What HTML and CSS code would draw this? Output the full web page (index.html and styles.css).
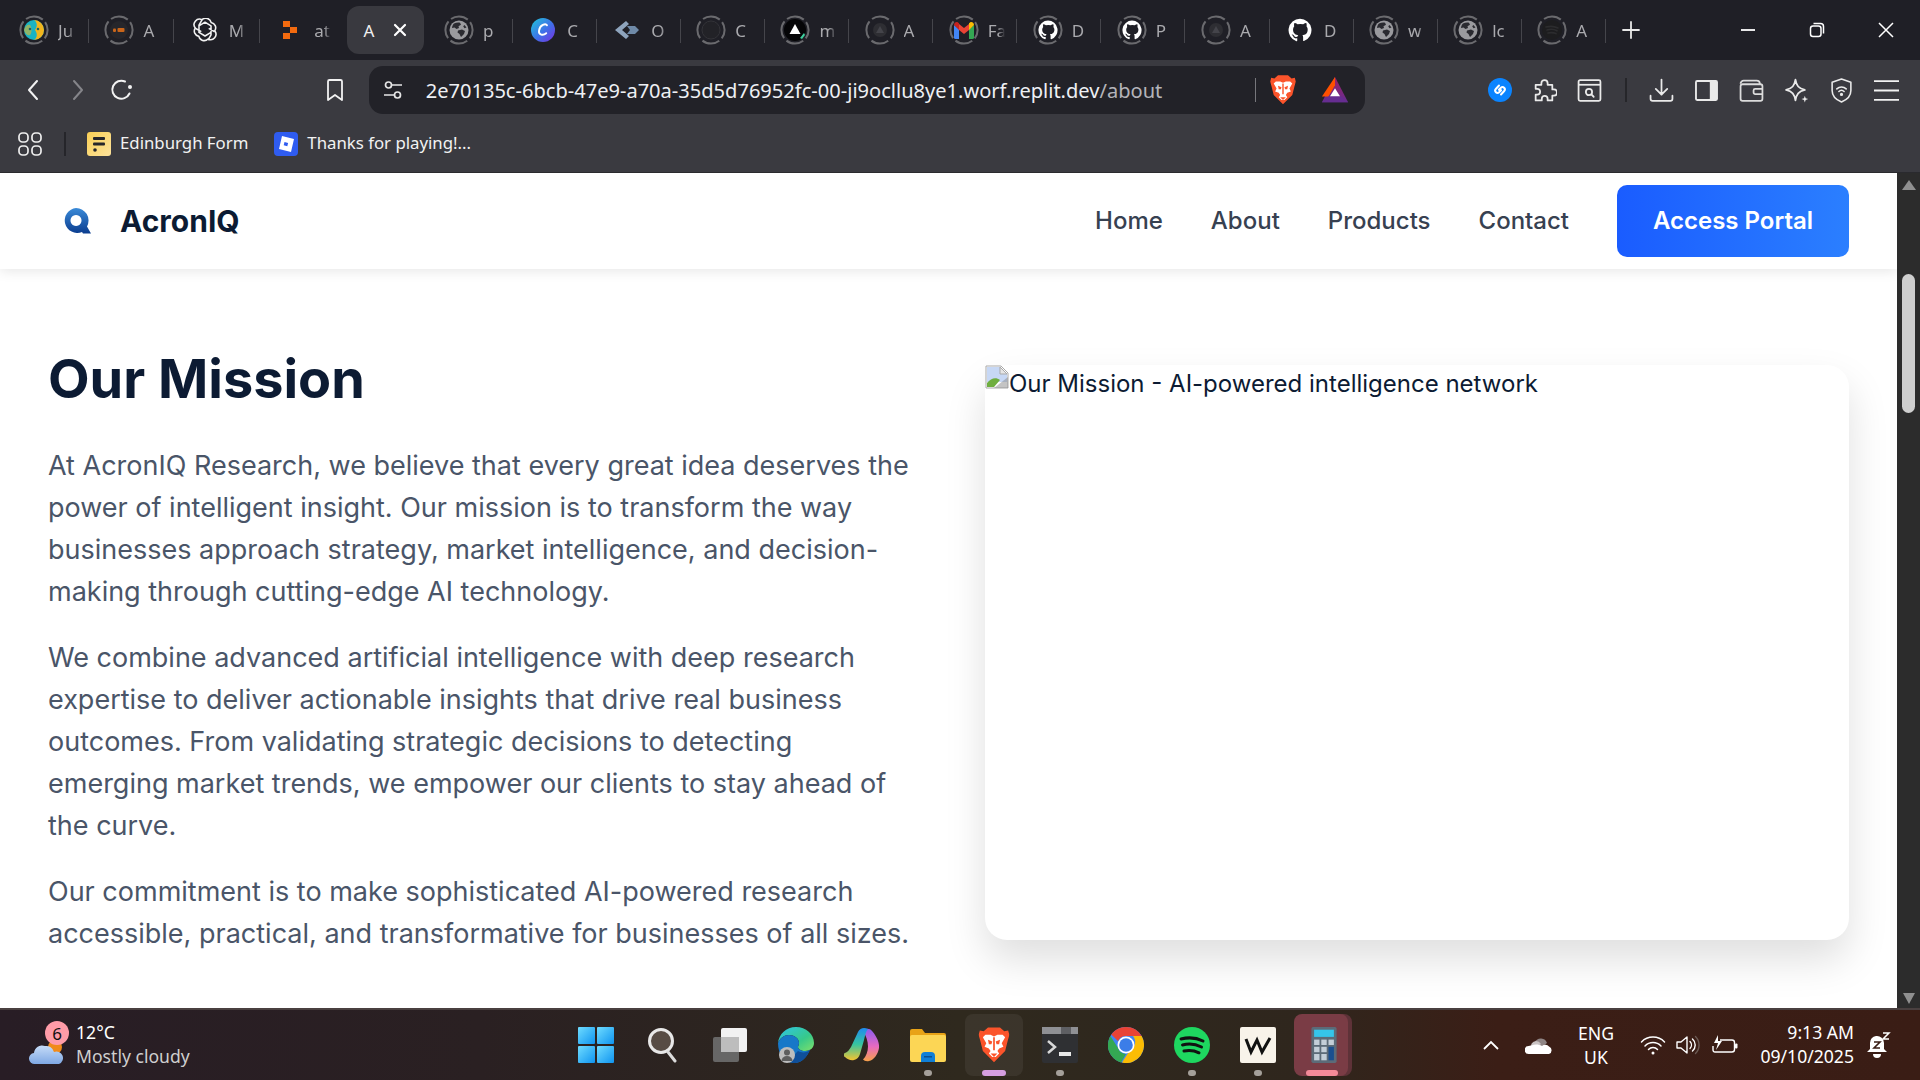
FILE: index.html
```html
<!DOCTYPE html>
<html lang="en">
<head>
<meta charset="utf-8">
<title>AcronIQ - About</title>
<link rel="stylesheet" href="styles.css">
</head>
<body>
<svg class="sprite" xmlns="http://www.w3.org/2000/svg">
  <defs>
    <linearGradient id="g-win" x1="0" y1="0" x2="1" y2="1"><stop offset="0" stop-color="#6fdcff"/><stop offset="1" stop-color="#0f94f0"/></linearGradient>
    <linearGradient id="g-btn" x1="0" y1="0" x2="0" y2="1"><stop offset="0" stop-color="#3a8ad8"/><stop offset="1" stop-color="#0b3d8f"/></linearGradient>
    <linearGradient id="g-edge" x1="0" y1="0" x2="1" y2="1"><stop offset="0" stop-color="#2fc4e8"/><stop offset=".6" stop-color="#37c98a"/><stop offset="1" stop-color="#7fe06a"/></linearGradient>
    <linearGradient id="g-cop1" x1="0" y1="0" x2="0" y2="1"><stop offset="0" stop-color="#1f8bf0"/><stop offset=".5" stop-color="#35c4a0"/><stop offset="1" stop-color="#f4c430"/></linearGradient>
    <linearGradient id="g-cop2" x1="0" y1="0" x2="0" y2="1"><stop offset="0" stop-color="#8a5cf0"/><stop offset=".55" stop-color="#e86ac0"/><stop offset="1" stop-color="#f7a14a"/></linearGradient>
    <linearGradient id="g-cloud" x1="0" y1="0" x2="0" y2="1"><stop offset="0" stop-color="#c6dcf8"/><stop offset="1" stop-color="#7fa8e4"/></linearGradient>
    <linearGradient id="g-bm" x1="0" y1="0" x2="1" y2="1"><stop offset="0" stop-color="#f9cf55"/><stop offset="1" stop-color="#fde39c"/></linearGradient>
    <linearGradient id="g-canva" x1="0" y1="0" x2="1" y2="1"><stop offset="0" stop-color="#1ec8d8"/><stop offset=".55" stop-color="#3f6fe8"/><stop offset="1" stop-color="#7a2fe0"/></linearGradient>
    <linearGradient id="g-bat" x1="0" y1="0" x2="0" y2="1"><stop offset="0" stop-color="#9e1f63"/><stop offset="1" stop-color="#662d91"/></linearGradient>
  </defs>
  <symbol id="ring" viewBox="0 0 30 30"><circle cx="15" cy="15" r="13.6" fill="none" stroke="#6a6a6e" stroke-width="2" stroke-dasharray="18 3.4" stroke-dashoffset="9"/></symbol>
  <symbol id="github" viewBox="0 0 20 20"><path fill="#fff" d="M10 .6a9.6 9.6 0 0 0-3 18.7c.5.1.7-.2.7-.5v-1.9c-2.700.6-3.200-1.200-3.200-1.200-.4-1.100-1-1.400-1-1.400-.9-.6.1-.6.1-.6 1 .1 1.500 1 1.500 1 .9 1.500 2.300 1.100 2.900.8.1-.6.3-1.100.6-1.300-2.100-.2-4.400-1.100-4.400-4.700 0-1 .4-1.900 1-2.600-.1-.2-.4-1.200.1-2.600 0 0 .8-.3 2.600 1a9 9 0 0 1 4.800 0c1.800-1.300 2.600-1 2.600-1 .5 1.400.2 2.400.1 2.600.6.7 1 1.600 1 2.600 0 3.700-2.300 4.500-4.400 4.700.3.300.6.900.6 1.800v2.700c0 .3.200.6.700.5A9.600 9.600 0 0 0 10 .6z"/></symbol>
  <symbol id="globe" viewBox="0 0 20 20"><circle cx="10" cy="10" r="9.500" fill="#9a9a9e"/><path fill="#2a2a30" d="M5 3.500c2-1 4.500-1.300 6-.8l1 2-2.500 1.500L10 8 7.500 9 5.500 7.500 3 8c0-1.800 1-3.500 2-4.500zM9 10.500l4-1 3 1.500-1 3-3 3-1.500-3-2-1.500zM15.500 5l2 2.500-2 .8-1.300-2z"/></symbol>
  <symbol id="dimicon" viewBox="0 0 20 20"><circle cx="10" cy="10" r="7" fill="#2e2e33"/><path d="M10 6l4 7H6z" fill="#44444a"/></symbol>
  <symbol id="brave" viewBox="0 0 36 42"><path fill="#fb542b" d="M30 5l-5-4.500H11L6 5 1.500 4 0 9l2 7 3 12 7 7 6 6 6-6 7-7 3-12 2-7-1.500-5z"/><path fill="#fff" d="M8 9h6l4 2 4-2h6l3 3-4 7 2 4-5 2-2 3 2 3-4 4h-4l-4-4 2-3-2-3-5-2 2-4-4-7z"/><path fill="#fb542b" d="M11 15l5 2-1 3h-3zM25 15l-5 2 1 3h3zM17 12h2v15h-2zM14 31h8l-4 4z"/></symbol>
  <symbol id="bat" viewBox="0 0 30 30"><path fill="url(#g-bat)" d="M15 1l14 27H1z"/><path fill="#ff5000" d="M15 1v9L8 22H1z"/><path fill="#fff" d="M15 13l5.500 9h-11z"/><path fill="#662d91" d="M1 28l7-6h14l7 6z"/></symbol>
</svg>

<div class="chrome">
  <div class="tabstrip">
    <div class="tab tab-wide"><span class="fav"><svg class="ringsvg"><use href="#ring"/></svg><svg class="favin" viewBox="0 0 20 20"><circle cx="10" cy="10" r="10" fill="#19b3c4"/><path fill="#f2b51d" d="M10 0c3 2 4 6 1 10 3 4 2 8-1 10a10 10 0 0 0 10-10A10 10 0 0 0 10 0z"/><path fill="#f2b51d" d="M0 10c1-4 4-6 6-5 2 2 2 8 0 10-2 1-5-1-6-5z" opacity=".55"/><circle cx="6" cy="9" r="1.300" fill="#14616b"/><circle cx="14" cy="9" r="1.300" fill="#14616b"/></svg></span><span class="tlabel">Ju</span></div>
    <div class="tab tab-wide"><span class="fav"><svg class="ringsvg"><use href="#ring"/></svg><svg class="favin" viewBox="0 0 20 20"><circle cx="10" cy="10" r="9" fill="#26262b"/><rect x="4" y="8.500" width="3" height="3.500" rx="1" fill="#c9651a"/><rect x="8.500" y="8" width="7" height="4" rx="1" fill="#c9651a"/></svg></span><span class="tlabel">A</span></div>
    <div class="tab tab-wide"><span class="fav"><svg class="favfull24" viewBox="2 2 20 20" fill="none" stroke="#f2f2f2" stroke-width="1.300" stroke-linejoin="round"><path d="M9.500 3.500a4.500 4.500 0 0 1 7.600 2.200 4.500 4.500 0 0 1 3 7 4.500 4.500 0 0 1-5.600 6.800 4.500 4.500 0 0 1-7.600-2.200 4.500 4.500 0 0 1-3-7 4.500 4.500 0 0 1 5.600-6.800z"/><path d="M9.500 3.500L7 8v6l5 3 5-3v-5.500l-5-3-5 3M14.500 20.500L17 16V9.500M3.900 10.500l5 2.800M20.100 13.500l-5-2.800"/></svg></span><span class="tlabel">M</span></div>
    <div class="tab tab-wide tab-nosep"><span class="fav"><svg class="favin" viewBox="0 0 20 20" fill="#f26a0f"><rect x="3" y="1" width="7" height="6"/><rect x="10" y="7" width="7" height="6"/><rect x="3" y="13" width="7" height="6"/></svg></span><span class="tlabel">at</span></div>
    <div class="tab-active"><div class="pill"><span class="alabel">A</span><svg class="closeic" viewBox="0 0 14 14" stroke="#fff" stroke-width="2.200" stroke-linecap="round"><path d="M2 2l10 10M12 2L2 12"/></svg></div></div>
    <div class="tab"><span class="fav"><svg class="ringsvg"><use href="#ring"/></svg><svg class="favin"><use href="#globe"/></svg></span><span class="tlabel">p</span></div>
    <div class="tab"><span class="fav"><svg class="favfull24" viewBox="0 0 30 30"><circle cx="15" cy="15" r="15" fill="url(#g-canva)"/><path d="M20 9c-1.500-2.500-9-1-10 7-.6 5 5 6.500 9 3" fill="none" stroke="#fff" stroke-width="2.400" stroke-linecap="round"/></svg></span><span class="tlabel">C</span></div>
    <div class="tab"><span class="fav"><svg class="favfull24" viewBox="0 0 24 18"><path fill="#8ea4bd" d="M11 0L0 9l11 9 3-3-7-6 7-6z"/><path fill="#6f8aa8" d="M12 5h8l4 4-4 4h-8l3-4z"/></svg></span><span class="tlabel">O</span></div>
    <div class="tab"><span class="fav"><svg class="ringsvg"><use href="#ring"/></svg><svg class="favin" viewBox="0 0 20 20"><circle cx="10" cy="10" r="9" fill="#222227" stroke="#333338"/></svg></span><span class="tlabel">C</span></div>
    <div class="tab"><span class="fav"><svg class="ringsvg"><use href="#ring"/></svg><svg class="favfull22" viewBox="0 0 22 22"><circle cx="11" cy="11" r="11" fill="#050507"/><path d="M11 5l5.500 10h-11z" fill="#fff"/><path d="M16 19l4-5 1 2-3 4z" fill="#3fd2a0"/></svg></span><span class="tlabel">m</span></div>
    <div class="tab"><span class="fav"><svg class="ringsvg"><use href="#ring"/></svg><svg class="favin"><use href="#dimicon"/></svg></span><span class="tlabel">A</span></div>
    <div class="tab"><span class="fav"><svg class="ringsvg"><use href="#ring"/></svg><svg class="favin" viewBox="0 0 20 18"><path fill="#4285f4" d="M0 4v12.500A1.500 1.500 0 0 0 1.500 18H5V8z"/><path fill="#34a853" d="M15 8v10h3.500a1.500 1.500 0 0 0 1.500-1.500V4z"/><path fill="#ea4335" d="M5 9V3l5 4 5-4v6l-5 4z"/><path fill="#c5221f" d="M0 4c0-2.500 2.500-3.500 4-2.500L5 2.300V9z"/><path fill="#fbbc04" d="M20 4c0-2.500-2.500-3.500-4-2.500l-1 .8V9z"/></svg></span><span class="tlabel">Fa</span></div>
    <div class="tab"><span class="fav"><svg class="ringsvg"><use href="#ring"/></svg><svg class="favin"><use href="#github"/></svg></span><span class="tlabel">D</span></div>
    <div class="tab"><span class="fav"><svg class="ringsvg"><use href="#ring"/></svg><svg class="favin"><use href="#github"/></svg></span><span class="tlabel">P</span></div>
    <div class="tab"><span class="fav"><svg class="ringsvg"><use href="#ring"/></svg><svg class="favin"><use href="#dimicon"/></svg></span><span class="tlabel">A</span></div>
    <div class="tab"><span class="fav"><svg class="favfull24"><use href="#github"/></svg></span><span class="tlabel">D</span></div>
    <div class="tab"><span class="fav"><svg class="ringsvg"><use href="#ring"/></svg><svg class="favin"><use href="#globe"/></svg></span><span class="tlabel">w</span></div>
    <div class="tab"><span class="fav"><svg class="ringsvg"><use href="#ring"/></svg><svg class="favin"><use href="#globe"/></svg></span><span class="tlabel">lc</span></div>
    <div class="tab"><span class="fav"><svg class="ringsvg"><use href="#ring"/></svg><svg class="favin" viewBox="0 0 20 20"><circle cx="10" cy="10" r="10" fill="#1d1d1f"/><path d="M4 7c4-1 8-1 12 1M5 10c3-1 7-1 10 .8M6 13c3-.7 5-.7 8 .6" fill="none" stroke="#2c2c2e" stroke-width="1.600" stroke-linecap="round"/></svg></span><span class="tlabel">A</span></div>
    <svg class="newtab" viewBox="0 0 18 18" stroke="#e8e8e8" stroke-width="1.800" stroke-linecap="round"><path d="M9 1v16M1 9h16"/></svg>
    <div class="winctl">
      <span class="wbtn"><svg class="wic" viewBox="0 0 16 16" stroke="#fff" stroke-width="1.800"><path d="M1 8h14"/></svg></span>
      <span class="wbtn"><svg class="wic" viewBox="0 0 16 16" fill="none" stroke="#fff" stroke-width="1.500"><rect x="1.500" y="4" width="10.500" height="10.500" rx="2.500"/><path d="M4.500 1.500h7a3 3 0 0 1 3 3v7"/></svg></span>
      <span class="wbtn"><svg class="wic" viewBox="0 0 16 16" stroke="#fff" stroke-width="1.500"><path d="M1 1l14 14M15 1L1 15"/></svg></span>
    </div>
  </div>

  <div class="toolbar">
    <span class="nb"><svg class="ic24" viewBox="0 0 24 24" fill="none" stroke="#f2f2f2" stroke-width="2" stroke-linecap="round" stroke-linejoin="round"><path d="M16 3l-8 9 8 9"/></svg></span>
    <span class="nb"><svg class="ic24" viewBox="0 0 24 24" fill="none" stroke="#85858a" stroke-width="2" stroke-linecap="round" stroke-linejoin="round"><path d="M8 3l8 9-8 9"/></svg></span>
    <span class="nb"><svg class="ic24" viewBox="0 0 24 24" fill="none" stroke="#f2f2f2" stroke-width="2" stroke-linecap="round"><path d="M19.500 15.500A9 9 0 1 1 15 3.500"/><circle cx="20" cy="9" r="2" fill="#f2f2f2" stroke="none"/></svg></span>
    <span class="nb bookmark"><svg class="ic24" viewBox="0 0 24 24" fill="none" stroke="#f2f2f2" stroke-width="1.800" stroke-linejoin="round"><path d="M5 3.500a1.500 1.500 0 0 1 1.500-1.500h11A1.500 1.500 0 0 1 19 3.500V22l-7-5-7 5z"/></svg></span>
    <div class="address">
      <svg class="ic24 sliders" viewBox="0 0 24 24" fill="none" stroke="#e6e6e6" stroke-width="1.700"><circle cx="7.500" cy="7" r="3"/><path d="M10.500 7H21M3 17h10.500"/><circle cx="16.500" cy="17" r="3"/></svg>
      <span class="url">2e70135c-6bcb-47e9-a70a-35d5d76952fc-00-ji9ocllu8ye1.worf.replit.dev<span class="url-path">/about</span></span>
      <span class="addr-div"></span>
      <svg class="braveic" viewBox="0 0 36 42"><use href="#brave"/></svg>
      <svg class="batic" viewBox="0 0 30 30"><use href="#bat"/></svg>
    </div>
    <div class="tools">
      <span class="tool"><svg class="ic24" viewBox="0 0 24 24"><circle cx="12" cy="12" r="12" fill="#0a84ff"/><path d="M11 7.500L7.800 11a2.300 2.300 0 0 0 3.300 3.200l2-2M13 16.500l3.200-3.500a2.300 2.300 0 0 0-3.300-3.200l-2 2" fill="none" stroke="#fff" stroke-width="2" stroke-linecap="round"/></svg></span>
      <span class="tool"><svg class="ic26" viewBox="0 0 24 24" fill="none" stroke="#eaeaea" stroke-width="1.700" stroke-linejoin="round"><path d="M9 5a3 3 0 0 1 6 0v1.500h4.500V11H21a3 3 0 0 1 0 6h-1.500v4.500H15V20a2.800 2.800 0 0 0-5.600 0v1.500H3.500V16H5a2.800 2.800 0 0 0 0-5.600H3.500V6.500H9z"/></svg></span>
      <span class="tool"><svg class="ic26" viewBox="0 0 24 24" fill="none" stroke="#eaeaea" stroke-width="1.700"><rect x="1.500" y="2" width="21" height="20" rx="1.500"/><path d="M1.500 6.500h21"/><circle cx="11.500" cy="13.500" r="3"/><path d="M13.800 15.800l2.200 2.200" stroke-linecap="round"/></svg></span>
      <span class="tool-div"></span>
      <span class="tool"><svg class="ic26" viewBox="0 0 24 24" fill="none" stroke="#eaeaea" stroke-width="1.700" stroke-linecap="round" stroke-linejoin="round"><path d="M12 1.500V16M6.500 10.500L12 16l5.500-5.500M1.500 17v3a2 2 0 0 0 2 2h17a2 2 0 0 0 2-2v-3"/></svg></span>
      <span class="tool"><svg class="ic26" viewBox="0 0 24 24"><rect x="1" y="2" width="22" height="20" rx="2" fill="#eaeaea"/><rect x="2.800" y="3.800" width="12.400" height="16.400" rx=".5" fill="#3a3a40"/></svg></span>
      <span class="tool"><svg class="ic26" viewBox="0 0 24 24" fill="none" stroke="#dcdcdc" stroke-width="1.700" stroke-linejoin="round"><path d="M1.500 5.500A3 3 0 0 1 4.500 2.500H17a3 3 0 0 1 3 3v1"/><rect x="1.500" y="6" width="21" height="16" rx="2"/><path d="M22.500 10.500H15.500a1.500 1.500 0 0 0-1.500 1.500v2a1.500 1.500 0 0 0 1.500 1.500h7"/></svg></span>
      <span class="tool"><svg class="ic26" viewBox="0 0 24 24" fill="none" stroke="#eaeaea" stroke-width="1.700" stroke-linejoin="round"><path d="M11 1.500c1 6 3 8.500 9 10-6 1.500-8 4-9 10-1-6-3-8.500-9-10 6-1.500 8-4 9-10z"/><path d="M20 17l.8 2.400 2.400.8-2.400.8-.8 2.400-.8-2.400-2.400-.8 2.400-.8z" fill="#eaeaea" stroke="none"/></svg></span>
      <span class="tool"><svg class="ic26" viewBox="0 0 24 24" fill="none" stroke="#eaeaea" stroke-width="1.500" stroke-linecap="round" stroke-linejoin="round"><path d="M12 1L3 4v8c0 5.500 4 9 9 11 5-2 9-5.500 9-11V4z"/><path d="M7.500 10.500a6.500 6.500 0 0 1 9 0M9.500 13a3.600 3.600 0 0 1 5 0"/><circle cx="12" cy="15.800" r=".8" fill="#eaeaea"/></svg></span>
      <span class="tool"><svg class="ic26" viewBox="0 0 24 24" stroke="#f2f2f2" stroke-width="1.800"><path d="M0 3h24M0 12h24M0 21h24"/></svg></span>
    </div>
  </div>

  <div class="bookmarks">
    <svg class="appgrid" viewBox="0 0 24 24" fill="none" stroke="#eee" stroke-width="1.700"><rect x="1" y="1" width="9" height="9" rx="3.500"/><rect x="14" y="1" width="9" height="9" rx="3.500"/><rect x="1" y="14" width="9" height="9" rx="3.500"/><rect x="14" y="14" width="9" height="9" rx="3.500"/></svg>
    <span class="bm-div"></span>
    <span class="bm"><svg class="bmic" viewBox="0 0 24 24"><rect width="24" height="24" rx="3" fill="url(#g-bm)"/><rect x="6" y="5" width="12" height="3" rx="1" fill="#26262a"/><rect x="6" y="10.500" width="12" height="3" rx="1" fill="#26262a"/><circle cx="8" cy="18" r="1.800" fill="#26262a"/></svg><span class="bmt">Edinburgh Form</span></span>
    <span class="bm bm2"><svg class="bmic" viewBox="0 0 24 24"><rect width="24" height="24" rx="4" fill="#2f5cf0"/><path d="M8 4l12 3-3 13-12-3zM10.500 10l-.8 3.300 3.600.9.800-3.300z" fill="#fff" fill-rule="evenodd"/></svg><span class="bmt">Thanks for playing!...</span></span>
  </div>
</div>

<div class="viewport">
  <div class="page">
    <nav class="nav">
      <a class="brand"><svg class="logo" viewBox="0 0 28 26"><path fill="url(#g-btn)" fill-rule="evenodd" d="M13 0a12.500 12.500 0 0 1 11 18.500L28 25.500h-8l-1-1.500A12.500 12.500 0 1 1 13 0zm0 7a5.500 5.500 0 1 0 .01 0z"/></svg><span class="brandname">AcronIQ</span></a>
      <div class="navlinks">
        <a class="navlink">Home</a>
        <a class="navlink">About</a>
        <a class="navlink">Products</a>
        <a class="navlink">Contact</a>
        <a class="portal">Access Portal</a>
      </div>
    </nav>
    <main class="mission">
      <section class="copy">
        <h1 class="title">Our Mission</h1>
        <p class="para">At AcronIQ Research, we believe that every great idea deserves the power of intelligent insight. Our mission is to transform the way businesses approach strategy, market intelligence, and decision-making through cutting-edge AI technology.</p>
        <p class="para">We combine advanced artificial intelligence with deep research expertise to deliver actionable insights that drive real business outcomes. From validating strategic decisions to detecting emerging market trends, we empower our clients to stay ahead of the curve.</p>
        <p class="para">Our commitment is to make sophisticated AI-powered research accessible, practical, and transformative for businesses of all sizes.</p>
      </section>
      <figure class="visual">
        <svg class="broken" viewBox="0 0 24 24"><path d="M1 1h15l7 7v15H1z" fill="#fff" stroke="#a9a9a9"/><path d="M2 2h13v7h7v8H2z" fill="#c7d8f5"/><path d="M2 22v-4c4-5 9-6 13-3l-6 7z" fill="#6fae3f"/><path d="M15 2l7 7h-7z" fill="#e6e6e6" stroke="#a9a9a9"/><path d="M9 23L23 12v11z" fill="#8a8a8a" opacity=".5"/></svg><span class="alt">Our Mission - AI-powered intelligence network</span>
      </figure>
    </main>
  </div>
  <aside class="scrollbar">
    <span class="arrow-up"></span>
    <span class="thumb"></span>
    <span class="arrow-down"></span>
  </aside>
</div>

<footer class="taskbar">
  <div class="weather">
    <span class="wicon">
      <svg class="cloud" viewBox="0 0 36 26"><circle cx="26" cy="8" r="7" fill="#f08a1a"/><path fill="url(#g-cloud)" d="M6 25a5.500 5.500 0 0 1-1-11 8 8 0 0 1 11-7 8 8 0 0 1 9 6 6 6 0 0 1 5 12z"/></svg>
      <span class="badge">6</span>
    </span>
    <span class="wtext"><span class="temp">12°C</span><span class="cond">Mostly cloudy</span></span>
  </div>
  <div class="apps">
    <span class="app app-first"><svg class="appic" viewBox="0 0 36 36" fill="url(#g-win)"><rect x="0" y="0" width="17" height="17" rx="1"/><rect x="19" y="0" width="17" height="17" rx="1"/><rect x="0" y="19" width="17" height="17" rx="1"/><rect x="19" y="19" width="17" height="17" rx="1"/></svg></span>
    <span class="app"><svg class="appic" viewBox="0 0 36 36"><circle cx="15" cy="14" r="11.500" fill="#574c45" stroke="#e8e8e8" stroke-width="3"/><path d="M22 25l7 9" stroke="#dcdcdc" stroke-width="3" stroke-linecap="round"/></svg></span>
    <span class="app"><svg class="appic" viewBox="0 0 36 36"><rect x="9" y="1" width="26" height="24" rx="2" fill="#f2f2f2"/><rect x="1" y="10" width="26" height="25" rx="2" fill="#6a6a6a" opacity=".95"/><rect x="9" y="10" width="18" height="15" fill="#bdbdbd"/></svg></span>
    <span class="app"><svg class="appic" viewBox="0 0 36 36"><path fill="url(#g-edge)" d="M18 0c10 0 18 7 18 16 0 5-4 8-9 8-4 0-7-2-7-4 0-1 1-2 1-4 0-5-5-8-10-8C6 8 2 11 0 16 1 7 8 0 18 0z"/><path fill="#1778c8" d="M0 16c2-5 6-8 11-8 5 0 10 3 10 8 0 2-1 3-1 4 0 2 3 4 7 4 2 0 4-.5 5-1.500C29 30 24 36 16 36 6 36 0 27 0 16z"/><path fill="#0f4f9a" d="M14 36c6 1 14-3 18-13-3 3-9 3-12 1-3 3-7 8-6 12z"/><circle cx="9" cy="28" r="8" fill="#bdbdbd"/><circle cx="9" cy="25.500" r="3" fill="#5e5e5e"/><path d="M3.500 34a5.500 5 0 0 1 11 0z" fill="#5e5e5e"/></svg></span>
    <span class="app"><svg class="appic" viewBox="0 0 36 36"><path fill="url(#g-cop2)" d="M19 4c2-3 7-3 9 0 2 2 8 10 7 17-1 6-5 12-10 13-3 .6-5-.5-6-1.500 3-3 5-8 5-13s-2-11-5-15.500z"/><path fill="url(#g-cop1)" d="M25 2c-4-2-8-1-10 3L8 20c-2 3-3 5-6 6-2 .8-2 3 0 4 2 2 6 4 9 3 3-.5 5-3 6-6l4-14c1-4 2-9 4-11z" transform="translate(-1 0)"/></svg></span>
    <span class="app"><svg class="appic" viewBox="0 0 36 36"><path d="M0 4a2 2 0 0 1 2-2h10l3 4h19a2 2 0 0 1 2 2v4H0z" fill="#e8a317"/><rect y="8" width="36" height="27" rx="2" fill="#fcd655"/><path d="M11 29a4 4 0 0 1 4-4h6a4 4 0 0 1 4 4v6H11z" fill="#0f7fd6"/><rect x="14" y="29" width="8" height="1.500" fill="#0a4f8f"/></svg><span class="dot"></span></span>
    <span class="app app-open"><svg class="appic" viewBox="0 0 36 42"><use href="#brave"/></svg><span class="pillmark mark-brave"></span></span>
    <span class="app"><svg class="appic" viewBox="0 0 36 36"><rect y="0" width="36" height="36" rx="2" fill="#2f3033"/><rect width="36" height="7" fill="#8f9094"/><rect x="19" width="10" height="7" fill="#5e5f63"/><path d="M6 14l7 6-7 6" fill="none" stroke="#d8d8d8" stroke-width="2.500"/><rect x="17" y="25" width="12" height="4" fill="#e8e8e8"/></svg><span class="dot"></span></span>
    <span class="app"><svg class="appic" viewBox="0 0 36 36"><circle cx="18" cy="18" r="18" fill="#4285f4"/><path d="M18 0a18 18 0 0 1 15.600 9H18a9 9 0 0 0-8 5L3.300 7.500A18 18 0 0 1 18 0z" fill="#ea4335"/><path d="M2.400 9L10 21a9 9 0 0 0 8 6l-5 8.500A18 18 0 0 1 2.400 9z" fill="#34a853"/><path d="M33.600 9A18 18 0 0 1 14 35.600L22 23a9 9 0 0 0 3-14z" fill="#fbbc04"/><circle cx="18" cy="18" r="8.500" fill="#fff"/><circle cx="18" cy="18" r="6.800" fill="#3b7de8"/></svg></span>
    <span class="app"><svg class="appic" viewBox="0 0 36 36"><circle cx="18" cy="18" r="18" fill="#1ed760"/><path d="M7 12c8-2 15-1.500 22 2M8.500 18c6-1.500 13-1 19 2M10 24c5-1 10-.7 15 1.800" fill="none" stroke="#111" stroke-width="3" stroke-linecap="round"/></svg><span class="dot"></span></span>
    <span class="app"><svg class="appic" viewBox="0 0 36 36"><rect width="36" height="36" rx="2" fill="#f8f3ea"/><path d="M6 12l5 13 6-12 5 12 8-14" fill="none" stroke="#111" stroke-width="3"/></svg><span class="dot"></span></span>
    <span class="app app-calc"><svg class="appic" viewBox="0 0 28 40"><rect width="28" height="40" rx="2" fill="#5c6b78"/><rect x="3" y="3" width="22" height="8" fill="#35c5ea"/><g fill="#c3ced8"><rect x="3" y="14" width="6" height="6"/><rect x="11" y="14" width="6" height="6"/><rect x="19" y="14" width="6" height="6"/><rect x="3" y="22" width="6" height="6"/><rect x="11" y="22" width="6" height="6"/><rect x="3" y="30" width="6" height="7"/><rect x="11" y="30" width="6" height="7"/></g><rect x="19" y="22" width="6" height="15" fill="#1a4f8f"/></svg><span class="pillmark mark-calc"></span></span>
  </div>
  <div class="tray">
    <svg class="t-chev" viewBox="0 0 18 12" fill="none" stroke="#fff" stroke-width="1.800"><path d="M2 10l7-7 7 7"/></svg>
    <svg class="t-cloud" viewBox="0 0 28 20"><path fill="#8f8585" d="M10 7a6.500 6.500 0 0 1 12 1l-8 6z"/><path fill="#c9c3c3" d="M6 13a5.500 5.500 0 0 1 5-7 6 6 0 0 1 5 3l-6 5z"/><path fill="#fff" d="M4 19a4 4 0 0 1-.5-8 7 7 0 0 1 3-.5C10 9 14 9.500 17 11a5 5 0 0 1 7 .5A4 4 0 0 1 24 19z"/></svg>
    <span class="lang"><span>ENG</span><span>UK</span></span>
    <svg class="t-wifi" viewBox="0 0 26 20" fill="none" stroke="#fff" stroke-width="1.500" stroke-linecap="round"><path d="M1.500 7a16 16 0 0 1 23 0M5 11a11 11 0 0 1 16 0M8.500 14.500a6 6 0 0 1 9 0"/><circle cx="13" cy="18" r="1.500" fill="#fff" stroke="none"/></svg>
    <svg class="t-vol" viewBox="0 0 24 20" fill="none" stroke="#fff" stroke-width="1.400" stroke-linejoin="round"><path d="M1 7h4l6-5v16l-6-5H1z"/><path d="M14 6.500a5 5 0 0 1 0 7M16.500 4a8 8 0 0 1 0 12" stroke-linecap="round"/><path d="M19.500 1.500a12 12 0 0 1 0 17" stroke="#6b5a54" stroke-linecap="round"/></svg>
    <svg class="t-bat" viewBox="0 0 26 22" fill="none" stroke="#fff" stroke-width="1.400"><path d="M8 6h12a2.500 2.500 0 0 1 2.500 2.500v7A2.500 2.500 0 0 1 20 18H3a2 2 0 0 1-2-2v-4"/><rect x="23" y="9.500" width="2.500" height="5" rx="1" fill="#fff" stroke="none"/><path d="M6 1L2 9h4l-2 7 6-9H6z" fill="#fff" stroke="none"/></svg>
    <span class="clock"><span>9:13 AM</span><span>09/10/2025</span></span>
    <svg class="t-bell" viewBox="0 0 26 28"><path fill="#fff" d="M11 5a7 7 0 0 1 8 7v6l3 3H2l3-3v-6a7 7 0 0 1 6-7zM8 23h8a4 4 0 0 1-8 0z"/><path d="M9 11h6l-6 6h6" fill="none" stroke="#3a1d15" stroke-width="1.600"/><path d="M18 2h6l-6 6h6" fill="none" stroke="#fff" stroke-width="1.500"/></svg>
  </div>
</footer>
</body>
</html>
```

FILE: styles.css
```css
* { box-sizing: border-box; }
html, body { margin: 0; height: 100%; }
body {
  display: flex;
  flex-direction: column;
  height: 100vh;
  overflow: hidden;
  font-family: "Noto Sans", sans-serif;
  background: #fff;
}
.sprite { position: absolute; width: 0; height: 0; }

/* browser chrome */
.chrome { background: #3a3a40; border-bottom: 1px solid #2a2a2e; padding-bottom: 5px; flex: none; }
.tabstrip { height: 60px; background: #1f1f26; display: flex; align-items: center; padding-left: 3.5px; }
.tab { width: 84.1px; height: 60px; display: flex; align-items: center; padding-left: 15.5px; gap: 9px; position: relative; flex: none; }
.tab-wide { width: 85.4px; }
.tab::after { content: ""; position: absolute; right: 0; top: 19px; height: 24px; width: 1px; background: #45454b; }
.tab-nosep::after { display: none; }
.fav { width: 30px; height: 30px; display: flex; align-items: center; justify-content: center; position: relative; flex: none; }
.ringsvg { position: absolute; inset: 0; width: 30px; height: 30px; }
.favin { width: 20px; height: 20px; }
.favfull24 { width: 24px; height: 24px; }
.favfull22 { width: 22px; height: 22px; }
.tlabel { width: 17px; overflow: hidden; white-space: nowrap; font-size: 17px; color: #aaaaae; mask-image: linear-gradient(90deg, #000 60%, transparent); -webkit-mask-image: linear-gradient(90deg, #000 60%, transparent); }
.tab-active { width: 83.5px; height: 60px; flex: none; display: flex; align-items: center; padding-left: 1.5px; }
.pill { width: 77px; height: 48px; border-radius: 12px; background: #39393f; display: flex; align-items: center; padding-left: 17px; gap: 17px; }
.alabel { font-size: 17px; color: #f0f0f0; width: 12px; }
.closeic { width: 14px; height: 14px; }
.newtab { width: 18px; height: 18px; margin-left: 16.5px; flex: none; }
.winctl { margin-left: auto; display: flex; }
.wbtn { width: 69px; height: 60px; display: flex; align-items: center; justify-content: center; }
.wic { width: 16px; height: 16px; }

.toolbar { height: 60px; display: flex; align-items: center; padding-left: 11px; }
.nb { width: 44.5px; display: flex; justify-content: center; flex: none; }
.bookmark { margin-left: 168px; margin-right: 11.7px; }
.ic24 { width: 24px; height: 24px; flex: none; }
.ic26 { width: 25px; height: 25px; flex: none; }
.address { width: 996px; height: 48px; background: #222228; border-radius: 14px; display: flex; align-items: center; padding: 0 16px 0 12px; flex: none; }
.sliders { margin-right: 21px; }
.url { flex: 1; font-size: 20.07px; color: #eef0f4; white-space: nowrap; }
.url-path { color: #b4b4ba; }
.addr-div { width: 1px; height: 24px; background: #77777c; margin-right: 14px; }
.braveic { width: 26px; height: 30px; margin-right: 25px; }
.batic { width: 28px; height: 28px; }
.tools { margin-left: auto; display: flex; align-items: center; padding-right: 11px; }
.tool { width: 45px; display: flex; justify-content: center; }
.tool-div { width: 2px; height: 24px; background: #26262a; margin: 0 12.5px; }

.bookmarks { height: 47px; display: flex; align-items: center; padding: 0 0 2px 18px; }
.appgrid { width: 24px; height: 24px; flex: none; margin-top: 2px; }
.bm-div { width: 2px; height: 24px; background: #25252a; margin: 2px 21px 0 22px; }
.bm { display: flex; align-items: center; gap: 9px; }
.bm2 { margin-left: 26px; }
.bmic { width: 24px; height: 24px; flex: none; margin-top: 2px; }
.bmt { font-size: 16.8px; color: #f2f2f2; white-space: nowrap; }

/* page */
.viewport { flex: 1; display: flex; min-height: 0; }
.page { flex: 1; min-width: 0; overflow: hidden; background: #fff; font-family: Inter, sans-serif; }
.nav { height: 96px; background: #fff; display: flex; align-items: center; justify-content: space-between; padding: 0 48px 0 63px; box-shadow: 0 2px 12px rgba(0, 0, 0, .1); position: relative; }
.brand { display: flex; align-items: center; gap: 29px; }
.logo { width: 28px; height: 26px; }
.brandname { font-size: 30px; font-weight: 700; color: #0c1b33; }
.navlinks { display: flex; align-items: center; gap: 48px; }
.navlink { font-size: 24px; font-weight: 500; color: #374151; padding-bottom: 2px; }
.portal { width: 232px; height: 72px; border-radius: 10px; background: linear-gradient(90deg, #1a5cff, #2b7fff); color: #fff; font-size: 24px; font-weight: 600; display: flex; align-items: center; justify-content: center; padding-bottom: 2px; }

.mission { display: grid; grid-template-columns: 864px 864px; column-gap: 73px; padding: 76px 48px 0; }
.title { margin: 0 0 33px; font-size: 54px; line-height: 67px; font-weight: 700; color: #0c1b33; }
.para { margin: 0 0 24px; font-size: 27px; line-height: 42px; color: #4a5568; }
.visual { margin: 20px 0 0; height: 575px; border-radius: 22px; background: #fff; box-shadow: 0 20px 40px rgba(0, 0, 0, .13); display: block; font-size: 24px; color: #0c1b33; line-height: 28px; }
.broken { width: 24px; height: 24px; display: inline-block; vertical-align: 3px; }
.alt { white-space: nowrap; }

.scrollbar { width: 23px; background: #2c2c2c; display: flex; flex-direction: column; align-items: center; flex: none; position: relative; padding-top: 7px; }
.arrow-up { width: 0; height: 0; border-left: 7px solid transparent; border-right: 7px solid transparent; border-bottom: 10px solid #8f8f8f; }
.thumb { width: 13px; height: 139px; border-radius: 7px; background: #cfcfcf; margin-top: 84px; }
.arrow-down { width: 0; height: 0; border-left: 6px solid transparent; border-right: 6px solid transparent; border-top: 11px solid #8f8f8f; margin-top: auto; margin-bottom: 4px; }

/* taskbar */
.taskbar { height: 72px; flex: none; display: flex; align-items: stretch; border-top: 2px solid #4a4040; background: linear-gradient(90deg, #281d25 0%, #2a2022 25%, #2f291e 50%, #2f261d 68%, #3b1e16 78%, #3a1d15 100%); color: #fff; }
.weather { width: 563px; display: flex; align-items: center; padding: 0 0 3px 29px; flex: none; }
.wicon { width: 47px; height: 48px; position: relative; display: block; margin-top: 3px; }
.cloud { width: 36px; height: 26px; position: absolute; left: 0; bottom: 4px; }
.badge { position: absolute; left: 16px; top: 0; width: 24px; height: 24px; border-radius: 50%; background: #ff9ca8; color: #111; font-size: 17px; display: flex; align-items: center; justify-content: center; }
.wtext { display: flex; flex-direction: column; font-size: 17.6px; line-height: 24px; }
.cond { color: #cfcfcf; }
.apps { display: flex; flex: none; }
.app { width: 66px; display: flex; align-items: center; justify-content: center; position: relative; }
.app-first { margin-right: 1.5px; }
.appic { width: 36px; height: 36px; }
.app-open::before, .app-calc::before { content: ""; position: absolute; top: 4px; bottom: 4px; border-radius: 8px; z-index: 0; }
.app-open::before { left: 4px; right: 4px; background: rgba(255, 255, 255, .06); }
.app-calc::before { left: 3px; right: 9px; background: #7a3c45; box-shadow: 4px 0 0 #5e3238; }
.app svg { position: relative; z-index: 1; }
.dot { position: absolute; left: 29px; bottom: 4px; width: 8px; height: 6px; border-radius: 3px; background: #a5a09a; }
.pillmark { position: absolute; bottom: 4px; height: 6px; border-radius: 3px; z-index: 1; }
.mark-brave { left: 21px; width: 24px; background: #d59ee0; }
.mark-calc { left: 15px; width: 32px; background: #f48a98; }
.tray { flex: 1; display: flex; align-items: center; }
.t-chev { width: 18px; height: 12px; margin-left: 125.5px; }
.t-cloud { width: 28px; height: 20px; margin-left: 25px; }
.lang { width: 44px; margin-left: 21px; display: flex; flex-direction: column; align-items: center; font-size: 17.6px; line-height: 24px; }
.t-wifi { width: 26px; height: 20px; margin-left: 22px; }
.t-vol { width: 24px; height: 20px; margin-left: 10px; }
.t-bat { width: 26px; height: 22px; margin-left: 12px; }
.clock { width: 116px; display: flex; flex-direction: column; align-items: flex-end; font-size: 17.6px; line-height: 24px; white-space: nowrap; padding-bottom: 3px; }
.t-bell { width: 26px; height: 28px; margin-left: 11px; }
```
